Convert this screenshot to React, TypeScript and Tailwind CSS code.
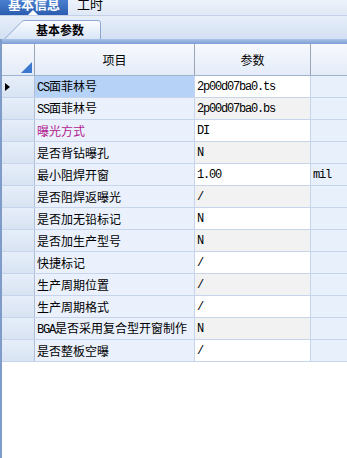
import React from 'react';

const rows: { item: string; value: string; unit?: string; accent?: boolean }[] = [
  { item: 'CS面菲林号', value: '2p00d07ba0.ts' },
  { item: 'SS面菲林号', value: '2p00d07ba0.bs' },
  { item: '曝光方式', value: 'DI', accent: true },
  { item: '是否背钻曝孔', value: 'N' },
  { item: '最小阻焊开窗', value: '1.00', unit: 'mil' },
  { item: '是否阻焊返曝光', value: '/' },
  { item: '是否加无铅标记', value: 'N' },
  { item: '是否加生产型号', value: 'N' },
  { item: '快捷标记', value: '/' },
  { item: '生产周期位置', value: '/' },
  { item: '生产周期格式', value: '/' },
  { item: 'BGA是否采用复合型开窗制作', value: 'N' },
  { item: '是否整板空曝', value: '/' },
];

const cjk = "font-['Noto_Sans_CJK_SC',sans-serif]";
const mono = "font-['Liberation_Mono','Noto_Sans_CJK_SC',monospace]";

function ItemText({ text }: { text: string }) {
  const m = text.match(/^([A-Z]+)(.*)$/);
  if (!m) return <span>{text}</span>;
  return (
    <span>
      <span className={`${mono} text-[12px] tracking-[-1.2px]`}>{m[1]}</span>
      {m[2]}
    </span>
  );
}

export default function App() {
  return (
    <div className={`w-[347px] h-[458px] overflow-hidden bg-white flex flex-col ${cjk} text-black`}>
      {/* top tabs */}
      <div className="h-[16px] flex bg-gradient-to-b from-[#eef3fb] to-[#dfe8f5] border-b border-[#c3d2e8]">
        <div className="relative w-[68px] bg-gradient-to-b from-[#4a7fd0] to-[#2c5eb0] flex justify-center">
          <span className="text-white font-bold text-[13px] leading-none -mt-[3px]">基本信息</span>
          <span className="absolute left-[28px] bottom-0 w-0 h-0 border-x-[5px] border-x-transparent border-b-[5px] border-b-white" />
        </div>
        <span className="ml-[9px] text-[13px] leading-none -mt-[3px]">工时</span>
      </div>

      {/* sub tab strip */}
      <div className="h-[23px] flex items-end bg-gradient-to-b from-[#e6eef9] to-[#d3e0f3] pl-[4px]">
        <div className="relative w-[98px] h-[19px] flex items-center justify-center pl-[14px]">
          <svg className="absolute inset-0" width="98" height="19" viewBox="0 0 98 19">
            <defs>
              <linearGradient id="tabg" x1="0" y1="0" x2="0" y2="1">
                <stop offset="0" stopColor="#fbfdff" />
                <stop offset="1" stopColor="#d9e5f6" />
              </linearGradient>
            </defs>
            <path d="M0.5 19 L18 1.5 Q19 0.5 21 0.5 L94 0.5 Q96.5 0.5 96.5 3 L96.5 19" fill="url(#tabg)" stroke="#8ea8d2" />
          </svg>
          <span className="relative font-bold text-[12px] leading-none">基本参数</span>
        </div>
      </div>

      {/* grid */}
      <div className="flex-1 flex flex-col border-l-2 border-[#7f9cc8]">
        <div className="h-[5px] bg-gradient-to-b from-[#a9c2e8] to-[#7d9fd6]" />
        <div className="h-[32px] flex border-b border-[#9fb3d0] bg-gradient-to-b from-[#f7f9fd] to-[#e4ecf8] text-[12px]">
          <div className="relative w-[33px] border-r border-[#9aa6b8]">
            <span className="absolute right-[2px] bottom-[2px] w-0 h-0 border-l-[11px] border-l-transparent border-b-[11px] border-b-[#3d78d0]" />
          </div>
          <div className="w-[160px] border-r border-[#9aa6b8] flex items-center justify-center">项目</div>
          <div className="w-[116px] border-r border-[#9aa6b8] flex items-center justify-center">参数</div>
          <div className="flex-1" />
        </div>
        {rows.map((r, i) => (
          <div key={i} className="h-[22px] flex border-b border-[#c6d5ec] text-[12px]">
            <div className="w-[33px] bg-gradient-to-b from-[#e6eef9] to-[#d8e3f3] border-r border-[#b0bfd6] flex items-center pl-[3px]">
              {i === 0 && <span className="w-0 h-0 border-y-[4px] border-y-transparent border-l-[5px] border-l-black" />}
            </div>
            <div
              className={`w-[160px] border-r border-[#c6d5ec] flex items-center pl-[2px] whitespace-nowrap ${
                i === 0 ? 'bg-[#b6d3f7]' : 'bg-[#eaf1fc]'
              } ${r.accent ? 'text-[#b3218f]' : ''}`}
            >
              <ItemText text={r.item} />
            </div>
            <div
              className={`w-[116px] border-r border-[#c6d5ec] flex items-center pl-[2px] ${mono} text-[12px] tracking-[-1.2px] ${
                i % 2 === 0 ? 'bg-white' : 'bg-[#f2f2f2]'
              }`}
            >
              {r.value}
            </div>
            <div className={`flex-1 bg-[#e8f0fc] flex items-center pl-[2px] ${mono} text-[12px] tracking-[-1.2px]`}>
              {r.unit ?? ''}
            </div>
          </div>
        ))}
      </div>
    </div>
  );
}
